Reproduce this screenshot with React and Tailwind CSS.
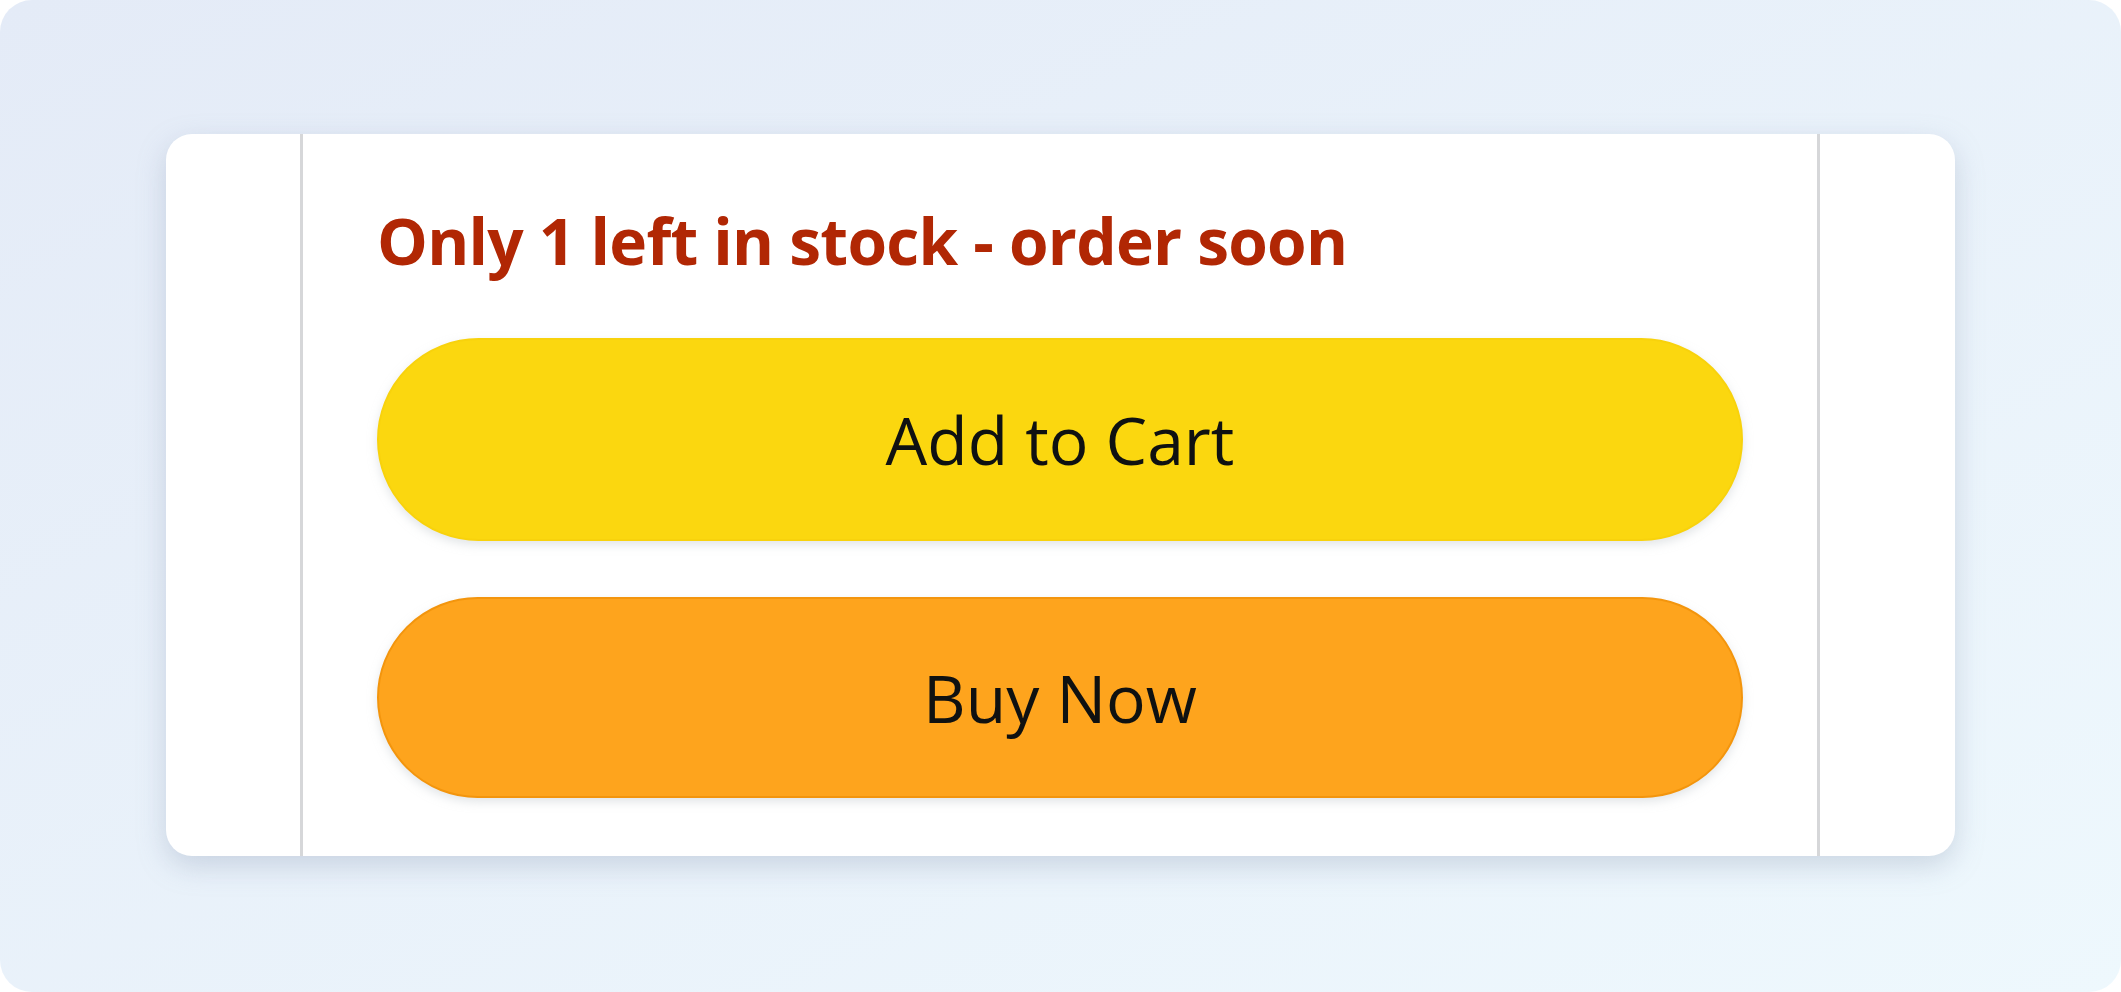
export default function App() {
  return (
    <div className="w-[2121px] h-[992px] bg-white">
      <div
        className="w-[2121px] h-[992px] rounded-[32px] bg-gradient-to-br from-[#e4ebf7] to-[#eef8fd] pt-[134px] pl-[166px]"
        style={{ fontFamily: '"Open Sans", "Noto Sans", sans-serif' }}
      >
        <div className="w-[1789px] h-[722px] bg-white rounded-[26px] shadow-[0_10px_28px_rgba(140,155,180,0.35)] flex overflow-hidden">
          <div className="w-[134px] shrink-0" />
          <div className="w-[3px] shrink-0 bg-[#d6d7d9]" />
          <div className="w-[1514px] shrink-0 px-[74px] pt-[75px] flex flex-col">
            <div className="h-[64px] leading-[64px] text-[64px] font-bold text-[#b12704] tracking-[-0.75px] whitespace-nowrap">
              Only 1 left in stock - order soon
            </div>
            <div className="mt-[65px] h-[203px] rounded-full bg-[#fbd70f] border-2 border-[#f8d20c] shadow-[0_4px_10px_rgba(200,205,210,0.5)] flex items-center justify-center text-[66px] font-normal text-[#0f1111]">
              Add to Cart
            </div>
            <div className="mt-[56px] h-[201px] rounded-full bg-[#fea41d] border-2 border-[#f3950d] shadow-[0_4px_10px_rgba(200,205,210,0.5)] flex items-center justify-center text-[66px] font-normal text-[#0f1111]">
              Buy Now
            </div>
          </div>
          <div className="w-[3px] shrink-0 bg-[#d6d7d9]" />
          <div className="flex-1" />
        </div>
      </div>
    </div>
  );
}
